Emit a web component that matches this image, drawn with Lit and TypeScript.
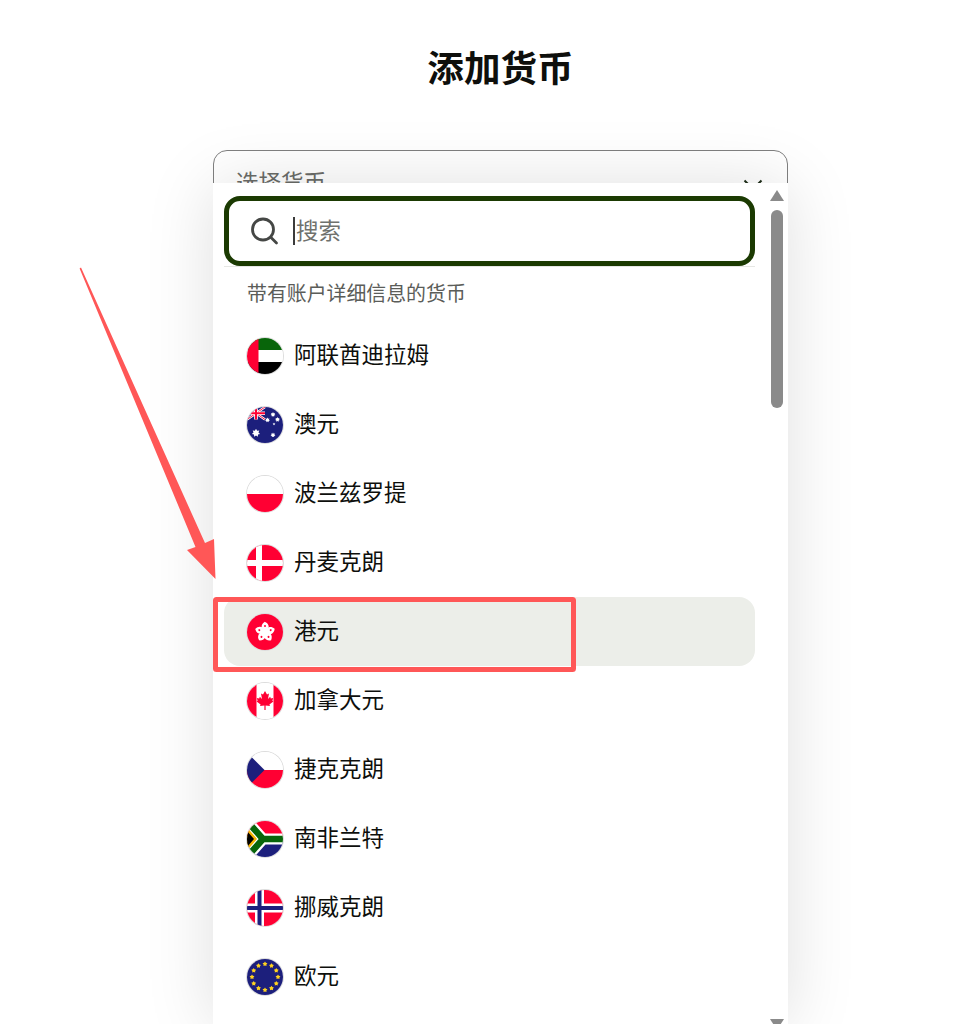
import { LitElement, html, css, svg } from "lit";
import { customElement } from "lit/decorators.js";

const RED = "#ff0033";
const NAVY = "#1c1f7c";
const GREEN = "#08650a";

function star(cx: number, cy: number, r: number, points = 5, inner = 0.42) {
  const pts: string[] = [];
  for (let i = 0; i < points * 2; i++) {
    const a = -Math.PI / 2 + (i * Math.PI) / points;
    const rr = i % 2 === 0 ? r : r * inner;
    pts.push(`${(cx + rr * Math.cos(a)).toFixed(2)},${(cy + rr * Math.sin(a)).toFixed(2)}`);
  }
  return pts.join(" ");
}

const flags: Record<string, unknown> = {
  ae: svg`<rect width="36" height="36" fill="#fff"/><rect width="36" height="12" fill="${GREEN}"/><rect y="24" width="36" height="12" fill="#000"/><rect width="11.5" height="36" fill="${RED}"/>`,
  au: svg`<rect width="36" height="36" fill="${NAVY}"/>
    <path d="M0 0L18 12.5M18 0L0 12.5" stroke="#fff" stroke-width="2.4"/>
    <path d="M0 0L18 12.5M18 0L0 12.5" stroke="${RED}" stroke-width="0.9"/>
    <path d="M9 0V12.5M0 6.25H18" stroke="#fff" stroke-width="3.6"/>
    <path d="M9 0V12.5M0 6.25H18" stroke="${RED}" stroke-width="2"/>
    <polygon points="${star(9, 26, 4.2, 7, 0.6)}" fill="#fff"/>
    <polygon points="${star(26, 7.5, 2.5, 7, 0.6)}" fill="#fff"/>
    <polygon points="${star(20.5, 13, 2.5, 7, 0.6)}" fill="#fff"/>
    <polygon points="${star(30.5, 12.5, 2.5, 7, 0.6)}" fill="#fff"/>
    <polygon points="${star(27, 17, 1.5, 5)}" fill="#fff"/>
    <polygon points="${star(26, 28, 2.5, 7, 0.6)}" fill="#fff"/>`,
  pl: svg`<rect width="36" height="36" fill="#fff"/><rect y="18" width="36" height="18" fill="${RED}"/>`,
  dk: svg`<rect width="36" height="36" fill="${RED}"/><rect x="9" width="6" height="36" fill="#fff"/><rect y="15" width="36" height="6" fill="#fff"/>`,
  hk: svg`<rect width="36" height="36" fill="${RED}"/>
    ${[0, 72, 144, 216, 288].map(
      (a) => svg`<g transform="rotate(${a} 18 18)">
        <path d="M18.4 18.4C14 16 13 10.8 17.8 7.8C22.8 9.8 23 15.2 18.4 18.4Z" fill="#fff"/>
        <circle cx="18" cy="12" r="1" fill="${RED}"/>
      </g>`
    )}`,
  ca: svg`<rect width="36" height="36" fill="#fff"/><rect width="9.5" height="36" fill="${RED}"/><rect x="26.5" width="9.5" height="36" fill="${RED}"/>
    <path d="M18 8L16 11.6L14 10.6L15 16L12.8 13.8L12.2 15.4L9.8 15L10.6 17.8L9.6 18.4L13.6 21.6L13 23L17.4 22.6L17.4 27H18.6L18.6 22.6L23 23L22.4 21.6L26.4 18.4L25.4 17.8L26.2 15L23.8 15.4L23.2 13.8L21 16L22 10.6L20 11.6Z" fill="${RED}"/>`,
  cz: svg`<rect width="36" height="36" fill="#fff"/><rect y="18" width="36" height="18" fill="${RED}"/><path d="M0 0.5L17.5 18L0 35.5Z" fill="${NAVY}"/>`,
  za: svg`<rect width="36" height="36" fill="#fff"/><rect width="36" height="15" fill="${RED}"/><rect y="21" width="36" height="15" fill="${NAVY}"/>
    <path d="M0 0L16 18L0 36M16 18H36" fill="none" stroke="#fff" stroke-width="11"/>
    <path d="M0 0L16 18L0 36M16 18H36" fill="none" stroke="${GREEN}" stroke-width="6.5"/>
    <path d="M0 6.5L10 18L0 29.5Z" fill="#f7b500"/>
    <path d="M0 10L7 18L0 26Z" fill="#000"/>`,
  no: svg`<rect width="36" height="36" fill="${RED}"/><rect x="8" width="9" height="36" fill="#fff"/><rect y="13.5" width="36" height="9" fill="#fff"/><rect x="10.5" width="4" height="36" fill="${NAVY}"/><rect y="16" width="36" height="4" fill="${NAVY}"/>`,
  eu: svg`<rect width="36" height="36" fill="${NAVY}"/>
    ${Array.from({ length: 12 }, (_, i) => {
      const a = (i * Math.PI) / 6;
      return svg`<polygon points="${star(18 + 13 * Math.sin(a), 18 - 13 * Math.cos(a), 2.6, 5, 0.55)}" fill="#ffd21f"/>`;
    })}`,
};

const currencies = [
  { code: "ae", name: "阿联酋迪拉姆" },
  { code: "au", name: "澳元" },
  { code: "pl", name: "波兰兹罗提" },
  { code: "dk", name: "丹麦克朗" },
  { code: "hk", name: "港元", active: true },
  { code: "ca", name: "加拿大元" },
  { code: "cz", name: "捷克克朗" },
  { code: "za", name: "南非兰特" },
  { code: "no", name: "挪威克朗" },
  { code: "eu", name: "欧元" },
];

@customElement("app-root")
export class AppRoot extends LitElement {
  static styles = css`
    :host {
      display: block;
      position: relative;
      width: 966px;
      height: 1024px;
      overflow: hidden;
      background: #fff;
      font-family: "Noto Sans CJK SC", "Noto Sans", sans-serif;
      color: #0e0f0c;
    }
    .page {
      width: 575px;
      margin-left: 213px;
      padding-top: 41px;
      display: flex;
      flex-direction: column;
    }
    h1 {
      margin: 0;
      height: 52px;
      line-height: 52px;
      font-size: 36.6px;
      font-weight: 700;
      text-align: center;
    }
    .field {
      position: relative;
      margin-top: 57px;
    }
    .select {
      box-sizing: border-box;
      height: 70px;
      border: 1px solid #808080;
      border-radius: 14px;
      padding: 0 22px;
      display: flex;
      align-items: center;
      justify-content: space-between;
      font-size: 22.5px;
      color: #6a6c68;
    }
    .select .text {
      padding-bottom: 9px;
    }
    .text {
      padding-bottom: 5px;
    }
    .chev {
      width: 20px;
      height: 12px;
      margin-right: 2px;
      flex: none;
    }
    .panel {
      position: absolute;
      top: 33px;
      left: 0;
      width: 575px;
      height: 841px;
      display: flex;
      background: #fff;
      box-shadow: 0 2px 64px rgba(0, 0, 0, 0.13);
      overflow: hidden;
    }
    .content {
      width: 531px;
      margin-left: 11px;
      padding-top: 13px;
      flex: none;
    }
    .search {
      box-sizing: border-box;
      height: 70px;
      border: 5px solid #1b3a02;
      border-radius: 16px;
      display: flex;
      align-items: center;
      padding-left: 19px;
      font-size: 22.5px;
      color: #6f716d;
    }
    .search svg {
      width: 32px;
      height: 32px;
      flex: none;
    }
    .caret {
      width: 2px;
      height: 28px;
      background: #3b3b3b;
      margin-left: 13px;
      margin-right: 1px;
      flex: none;
    }
    .rule {
      height: 1px;
      background: #e6e7e4;
    }
    .label {
      height: 54px;
      padding-left: 23px;
      display: flex;
      align-items: center;
      font-size: 19.9px;
      color: #5b5d59;
    }
    .label span {
      padding-bottom: 3px;
    }
    .row {
      height: 69px;
      display: flex;
      align-items: center;
      gap: 11px;
      padding-left: 23px;
      border-radius: 16px;
      font-size: 22.5px;
      color: #0e0f0c;
    }
    .row.active {
      background: #eceee9;
    }
    .flag {
      width: 36px;
      height: 36px;
      border-radius: 50%;
      overflow: hidden;
      box-shadow: 0 0 0 1px #dcdcdc;
      flex: none;
      display: block;
    }
    .bar {
      margin-left: 15px;
      width: 14px;
      padding-top: 7px;
      display: flex;
      flex-direction: column;
      align-items: center;
      flex: none;
    }
    .up,
    .down {
      width: 0;
      height: 0;
      border-left: 7px solid transparent;
      border-right: 7px solid transparent;
      flex: none;
    }
    .up {
      border-bottom: 11px solid #8a8a8a;
    }
    .down {
      border-top: 11px solid #8a8a8a;
      margin-top: auto;
      margin-bottom: -6px;
    }
    .thumb {
      width: 12.6px;
      height: 198px;
      margin-top: 9px;
      border-radius: 7px;
      background: #8a8a8a;
      flex: none;
    }
    .mark {
      position: absolute;
      inset: 0;
      width: 966px;
      height: 1024px;
      pointer-events: none;
    }
  `;

  render() {
    return html`
      <div class="page">
        <h1>添加货币</h1>
        <div class="field">
          <div class="select">
            <span class="text">选择货币</span>
            <svg class="chev" viewBox="0 0 20 12" fill="none" stroke="#1f2f1a" stroke-width="2">
              <path d="M1.5 1.5L10 10L18.5 1.5" />
            </svg>
          </div>
          <div class="panel">
            <div class="content">
              <div class="search">
                <svg viewBox="0 0 32 32" fill="none" stroke="#454745" stroke-width="2.8" stroke-linecap="round">
                  <circle cx="15" cy="14.5" r="10.5" />
                  <path d="M23 22.5L28.5 28" />
                </svg>
                <span class="caret"></span>
                <span class="text">搜索</span>
              </div>
              <div class="rule"></div>
              <div class="label"><span>带有账户详细信息的货币</span></div>
              ${currencies.map(
                (c) => html`
                  <div class="row ${c.active ? "active" : ""}">
                    <svg class="flag" viewBox="0 0 36 36">${flags[c.code]}</svg>
                    <span class="text">${c.name}</span>
                  </div>
                `
              )}
            </div>
            <div class="bar">
              <div class="up"></div>
              <div class="thumb"></div>
              <div class="down"></div>
            </div>
          </div>
        </div>
      </div>
      <svg class="mark" viewBox="0 0 966 1024">
        <polygon points="79.6,268.4 81,267.6 205,543 214,539 215.5,579 187,550 195.5,547" fill="#ff5757" />
        <rect x="215.5" y="599.5" width="358" height="70" rx="1" fill="none" stroke="#ff5757" stroke-width="5" />
      </svg>
    `;
  }
}
